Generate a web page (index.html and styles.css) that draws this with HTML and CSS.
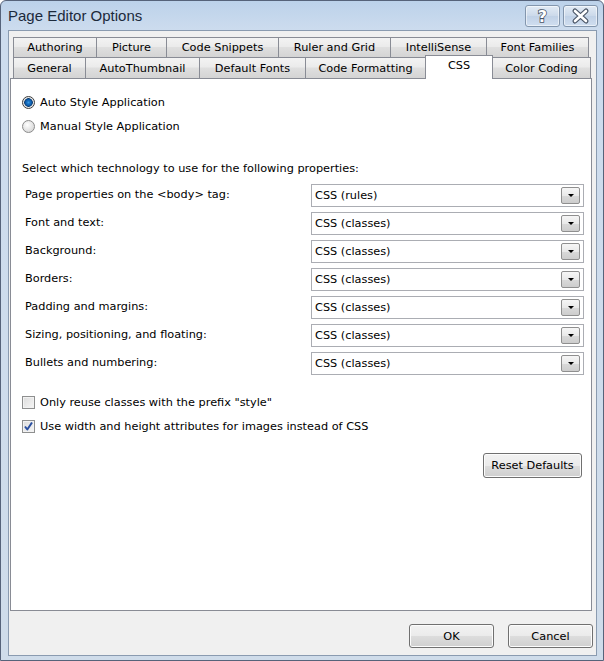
FILE: index.html
```html
<!DOCTYPE html>
<html>
<head>
<meta charset="utf-8">
<title>Page Editor Options</title>
<link rel="stylesheet" href="styles.css">
</head>
<body>
<div class="window">
  <div class="titlebar">
    <div class="title">Page Editor Options</div>
    <div class="caption-buttons">
      <div class="cap-btn">
        <svg width="33" height="20" viewBox="0 0 33 20"><text x="16.5" y="15.5" text-anchor="middle" class="cap-q">?</text></svg>
      </div>
      <div class="cap-btn">
        <svg width="33" height="20" viewBox="0 0 33 20">
          <path d="M11 5 L22 15 M22 5 L11 15" class="cap-x-out"/>
          <path d="M11 5 L22 15 M22 5 L11 15" class="cap-x-in"/>
        </svg>
      </div>
    </div>
  </div>
  <div class="client">
    <div class="tabs-area">
      <div class="tab-row back">
        <div class="tab w-authoring">Authoring</div>
        <div class="tab w-picture">Picture</div>
        <div class="tab w-snippets">Code Snippets</div>
        <div class="tab w-ruler">Ruler and Grid</div>
        <div class="tab w-intelli">IntelliSense</div>
        <div class="tab w-families">Font Families</div>
      </div>
      <div class="tab-row front">
        <div class="tab w-general">General</div>
        <div class="tab w-thumb">AutoThumbnail</div>
        <div class="tab w-deffonts">Default Fonts</div>
        <div class="tab w-format">Code Formatting</div>
        <div class="tab w-css selected">CSS</div>
        <div class="tab w-color">Color Coding</div>
      </div>
      <div class="panel">
        <div class="option-row"><span class="radio checked"></span><span>Auto Style Application</span></div>
        <div class="option-row"><span class="radio"></span><span>Manual Style Application</span></div>

        <div class="section-label">Select which technology to use for the following properties:</div>

        <div class="prop-grid">
          <div class="prop-label">Page properties on the &lt;body&gt; tag:</div>
          <div class="combo"><span>CSS (rules)</span><span class="combo-btn"></span></div>
          <div class="prop-label">Font and text:</div>
          <div class="combo"><span>CSS (classes)</span><span class="combo-btn"></span></div>
          <div class="prop-label">Background:</div>
          <div class="combo"><span>CSS (classes)</span><span class="combo-btn"></span></div>
          <div class="prop-label">Borders:</div>
          <div class="combo"><span>CSS (classes)</span><span class="combo-btn"></span></div>
          <div class="prop-label">Padding and margins:</div>
          <div class="combo"><span>CSS (classes)</span><span class="combo-btn"></span></div>
          <div class="prop-label">Sizing, positioning, and floating:</div>
          <div class="combo"><span>CSS (classes)</span><span class="combo-btn"></span></div>
          <div class="prop-label">Bullets and numbering:</div>
          <div class="combo"><span>CSS (classes)</span><span class="combo-btn"></span></div>
        </div>

        <div class="checks">
          <div class="option-row"><span class="checkbox"></span><span>Only reuse classes with the prefix "style"</span></div>
          <div class="option-row"><span class="checkbox checked"><svg width="11" height="11" viewBox="0 0 11 11"><path d="M2 5.5 L4.3 8.5 L9 1.5" class="tick"/></svg></span><span>Use width and height attributes for images instead of CSS</span></div>
        </div>

        <div class="reset-row"><div class="btn reset">Reset Defaults</div></div>
      </div>
    </div>
    <div class="dialog-buttons">
      <div class="btn ok">OK</div>
      <div class="btn cancel">Cancel</div>
    </div>
  </div>
</div>
</body>
</html>
```

FILE: styles.css
```css
* { box-sizing: border-box; }
html, body { margin: 0; padding: 0; }
body {
  width: 604px;
  height: 661px;
  background: #ffffff;
  font-family: "DejaVu Sans", sans-serif;
  font-size: 11.3px;
  color: #000;
}
.window {
  width: 604px;
  height: 661px;
  border: 1px solid #56637a;
  border-radius: 6px 6px 0 0;
  background: linear-gradient(to bottom, #bcd2ea 0px, #cddcee 30px, #cfdcea 100%);
  display: flex;
  flex-direction: column;
}
.titlebar {
  height: 29px;
  display: flex;
  align-items: flex-start;
  justify-content: space-between;
}
.title {
  font-family: "Liberation Sans", Arial, sans-serif;
  font-size: 15px;
  color: #1c2a3c;
  padding: 6px 0 0 7px;
}
.caption-buttons {
  display: flex;
  gap: 3px;
  margin: 4px 5px 0 0;
}
.cap-btn {
  width: 35px;
  height: 22px;
  border: 1px solid #8396ad;
  border-radius: 3px;
  background: linear-gradient(to bottom, #e2ebf5, #cbd9ea 50%, #c0d1e6 51%, #d0def0);
  box-shadow: inset 0 0 0 1px rgba(255,255,255,0.55);
  display: flex;
  align-items: center;
  justify-content: center;
}
.cap-q {
  font-family: "DejaVu Sans", sans-serif;
  font-weight: bold;
  font-size: 16px;
  fill: #ffffff;
  stroke: #4a5566;
  stroke-width: 1.6px;
  paint-order: stroke fill;
}
.cap-x-out { stroke: #4a5566; stroke-width: 5; stroke-linecap: round; fill: none; }
.cap-x-in { stroke: #ffffff; stroke-width: 2.6; stroke-linecap: round; fill: none; }

.client {
  flex: 1;
  margin: 0 6px 4px 7px;
  border: 1px solid #8a9bb0;
  background: #f0f0f0;
  display: flex;
  flex-direction: column;
}
.tabs-area {
  flex: 1;
  margin: 6px 4px 0 1px;
  display: flex;
  flex-direction: column;
}
.tab-row {
  display: flex;
  padding-left: 3px;
}
.tab-row.back { height: 20px; }
.tab-row.front { height: 21px; position: relative; z-index: 1; }
.tab {
  margin-left: -1px;
  border: 1px solid #898c95;
  border-bottom: none;
  background: linear-gradient(to bottom, #f3f3f3 0%, #ebebeb 45%, #dfdfdf 50%, #d4d4d4 100%);
  display: flex;
  align-items: center;
  justify-content: center;
  white-space: nowrap;
  height: 100%;
}
.tab:first-child { margin-left: 0; }
.tab.selected {
  background: #ffffff;
  height: 24px;
  margin-top: -2px;
  padding-bottom: 4px;
}
.w-authoring { width: 84px; }
.w-picture { width: 71px; }
.w-snippets { width: 113px; }
.w-ruler { width: 113px; }
.w-intelli { width: 97px; }
.w-families { width: 103px; }
.w-general { width: 73px; }
.w-thumb { width: 115px; }
.w-deffonts { width: 107px; }
.w-format { width: 121px; }
.w-css { width: 68px; }
.w-color { width: 99px; }

.panel {
  flex: 1;
  background: #ffffff;
  border: 1px solid #898c95;
  padding: 11px 7px 0 11px;
}
.option-row {
  height: 24px;
  display: flex;
  align-items: center;
  gap: 5px;
  padding-top: 1px;
}
.radio {
  width: 13px;
  height: 13px;
  border-radius: 50%;
  border: 1px solid #8b8b8b;
  background: radial-gradient(circle at 40% 35%, #ffffff 0%, #e8e8e8 45%, #cfcfcf 100%);
  flex: none;
}
.radio.checked {
  border-color: #3c3c3c;
  background: radial-gradient(circle at 50% 50%, #3a9be6 0, #1a74c4 1.5px, #0b5bab 3px, #0f3f72 4px, #e6e6e6 4.6px, #f4f4f4 100%);
}
.section-label {
  margin-top: 20px;
  height: 20px;
  display: flex;
  align-items: center;
}
.prop-grid {
  display: grid;
  grid-template-columns: 1fr 273px;
  grid-auto-rows: 23px;
  row-gap: 5px;
  padding-left: 3px;
  margin-top: 6px;
}
.prop-label {
  display: flex;
  align-items: center;
  padding-bottom: 3px;
}
.combo {
  border: 1px solid #abadb3;
  background: #ffffff;
  display: flex;
  align-items: center;
  justify-content: space-between;
  padding: 0 3px 0 3px;
}
.combo-btn {
  width: 19px;
  height: 17px;
  border: 1px solid #8f8f8f;
  border-radius: 2px;
  background: linear-gradient(to bottom, #f6f6f6 0%, #e9e9e9 50%, #d9d9d9 51%, #cdcdcd 100%);
  position: relative;
}
.combo-btn::after {
  content: "";
  position: absolute;
  left: 6px;
  top: 6px;
  border-left: 3px solid transparent;
  border-right: 3px solid transparent;
  border-top: 3px solid #000;
}
.checks { margin-top: 15px; }
.checkbox {
  width: 13px;
  height: 13px;
  border: 1px solid #8e8f8f;
  background: linear-gradient(135deg, #dcdcdc, #f6f6f6);
  box-shadow: inset 0 0 0 1px #f2f2f2;
  flex: none;
  display: flex;
  align-items: center;
  justify-content: center;
}
.tick { stroke: #2a4fa0; stroke-width: 2; fill: none; stroke-linejoin: round; }
.reset-row {
  display: flex;
  justify-content: flex-end;
  margin-top: 15px;
  padding-right: 2px;
}
.btn {
  height: 25px;
  border: 1px solid #707070;
  border-radius: 3px;
  background: linear-gradient(to bottom, #f2f2f2 0%, #ebebeb 50%, #dddddd 51%, #cfcfcf 100%);
  box-shadow: inset 0 0 0 1px #fcfcfc;
  display: flex;
  align-items: center;
  justify-content: center;
}
.reset { width: 99px; }
.dialog-buttons {
  display: flex;
  justify-content: flex-end;
  gap: 14px;
  padding: 13px 3px 7px 0;
}
.ok, .cancel { width: 85px; height: 24px; }
```
